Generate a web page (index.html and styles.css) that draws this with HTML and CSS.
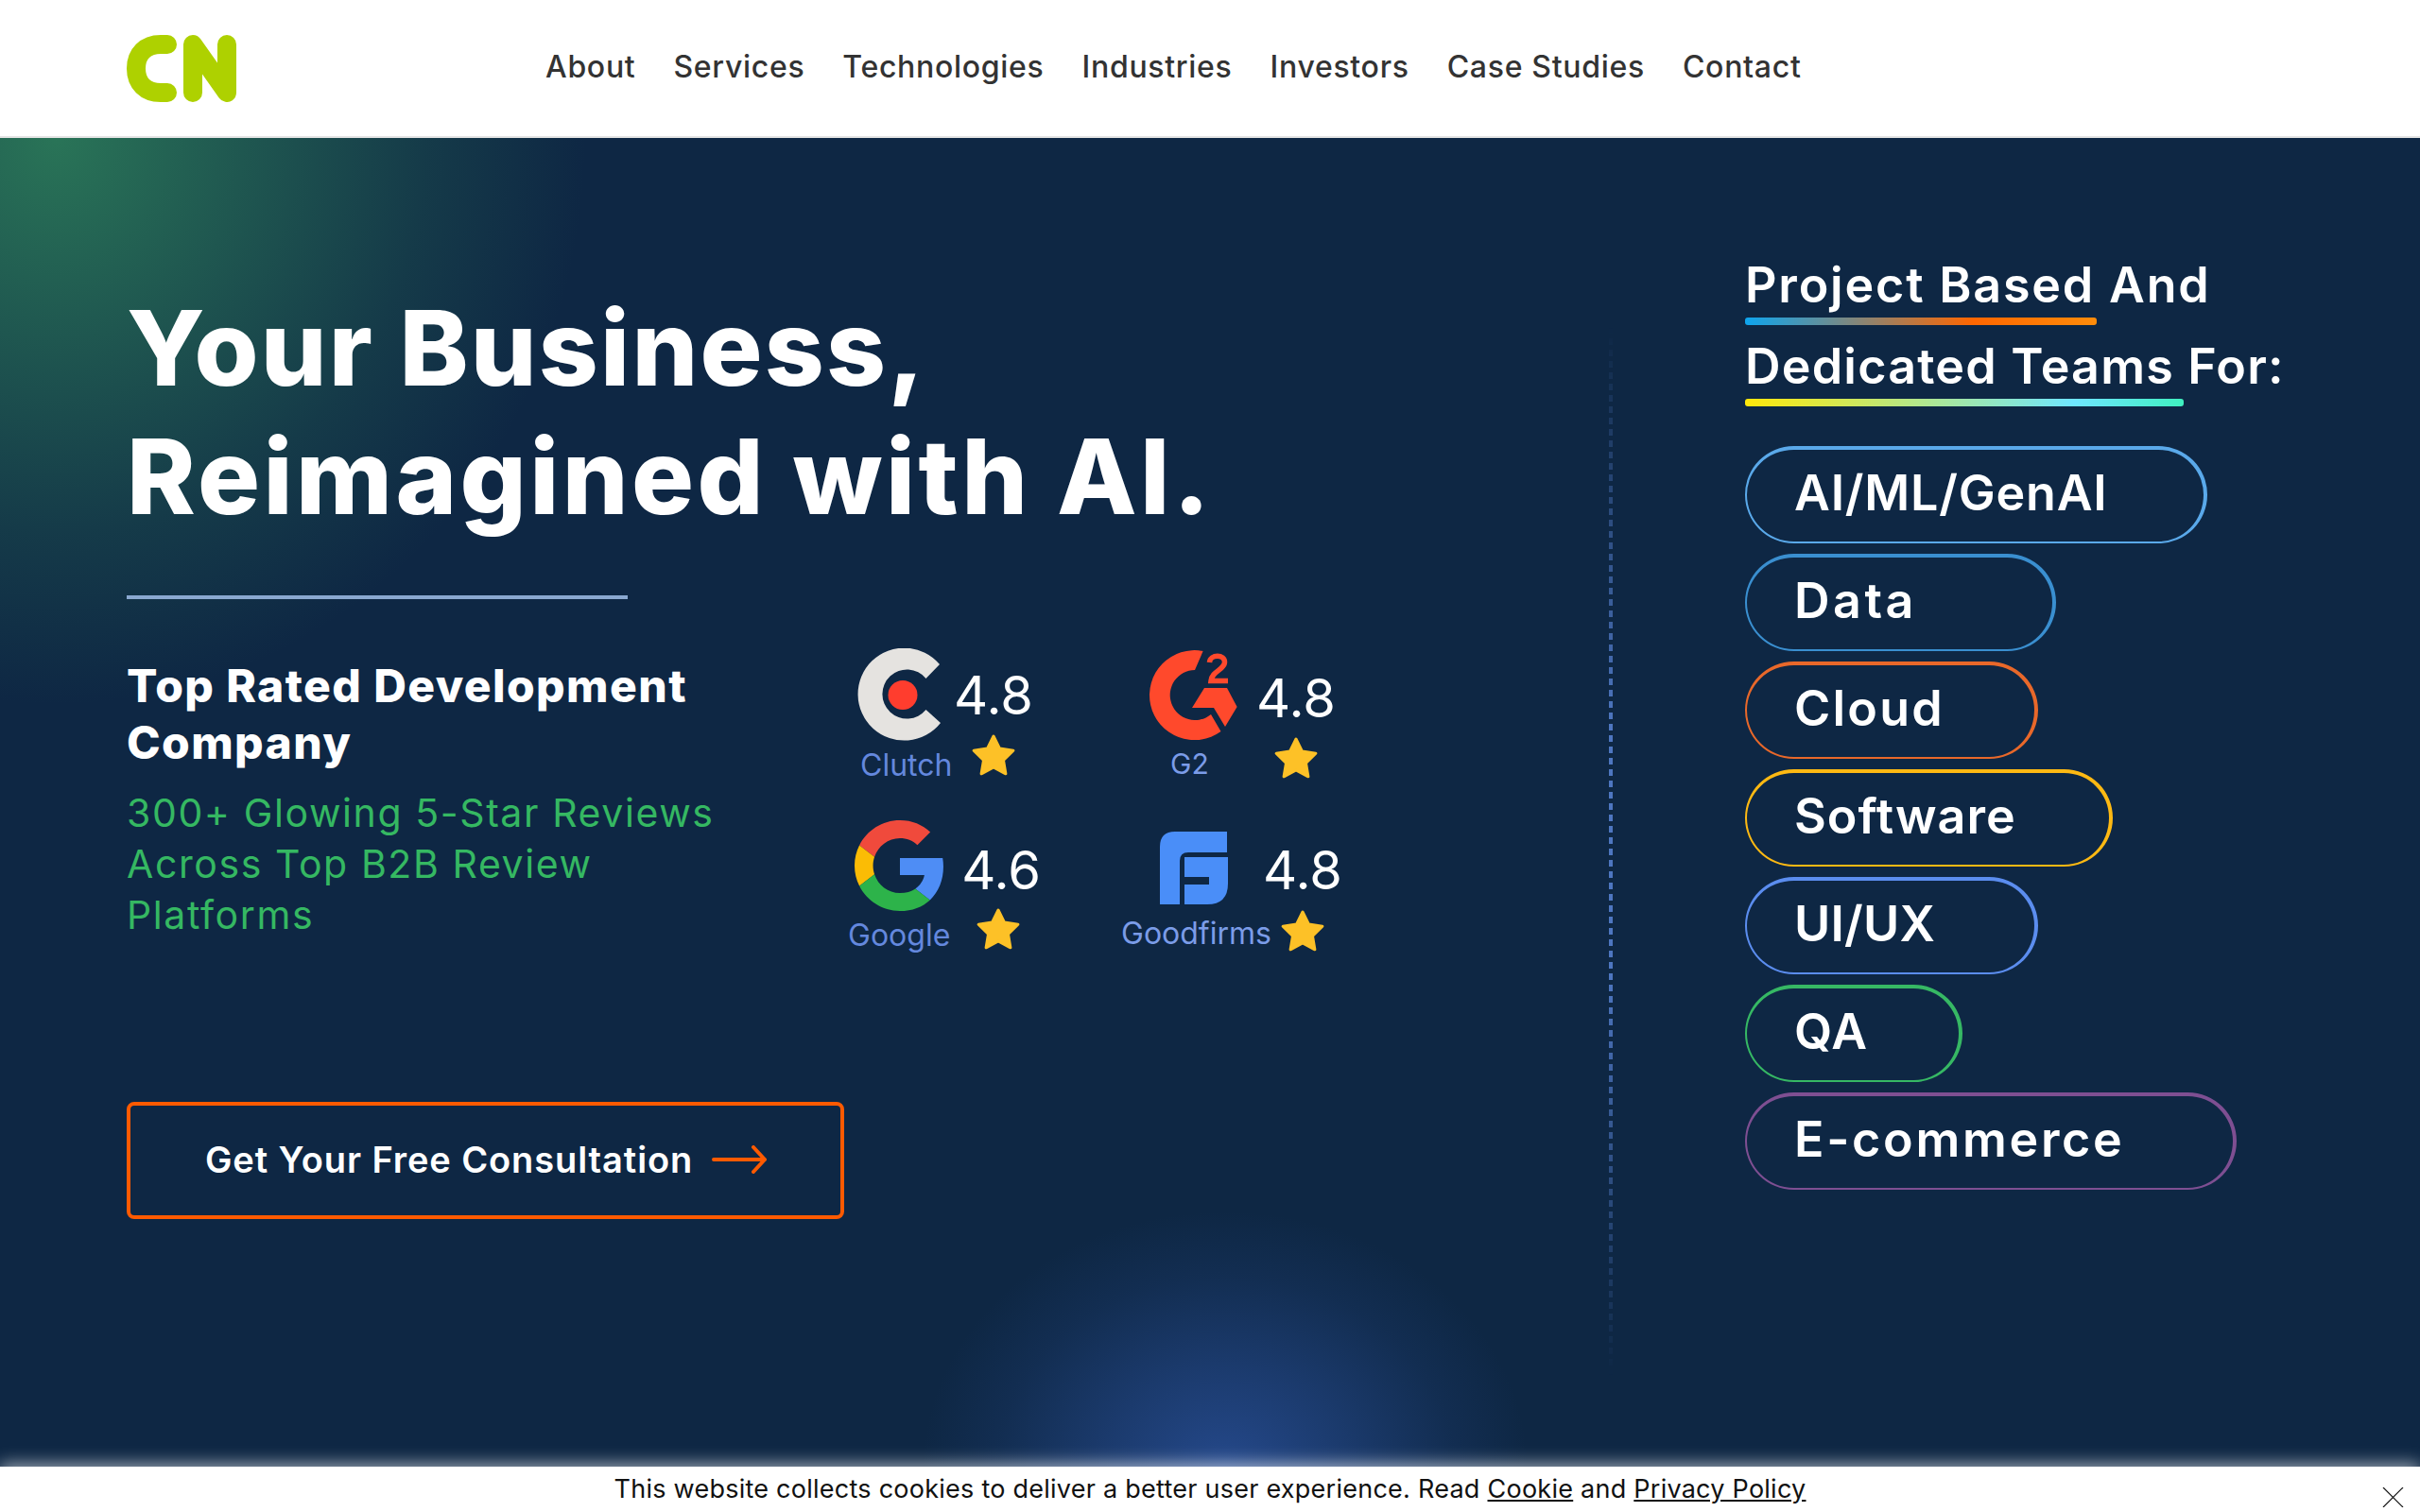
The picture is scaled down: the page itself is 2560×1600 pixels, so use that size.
FILE: index.html
```html
<!DOCTYPE html>
<html lang="en">
<head>
<meta charset="utf-8">
<title>CN</title>
<link rel="stylesheet" href="styles.css">
</head>
<body>
<header class="site-header">
  <a class="logo" href="#" aria-label="CN">
    <svg viewBox="0 0 116 71" width="116" height="71"><g fill="none" stroke="#aed100" stroke-width="20" stroke-linecap="round" stroke-linejoin="round"><path d="M43 10H36C20 10 10 20 10 35.5S20 61 36 61H43"/><path d="M70 61V10L106 61V10"/></g></svg>
  </a>
  <nav class="main-nav">
    <a class="nav-about" href="#">About</a>
    <a class="nav-services" href="#">Services</a>
    <a class="nav-tech" href="#">Technologies</a>
    <a class="nav-ind" href="#">Industries</a>
    <a class="nav-inv" href="#">Investors</a>
    <a class="nav-case" href="#">Case Studies</a>
    <a class="nav-contact" href="#">Contact</a>
  </nav>
</header>
<main class="hero">
  <section class="hero-left">
    <h1 class="headline"><span class="headline-top">Your Business,</span><span class="headline-bottom">Reimagined with AI.</span></h1>
    <div class="rule"></div>
    <div class="proof">
      <div class="proof-text">
        <h2 class="proof-title">Top Rated Development Company</h2>
        <p class="proof-sub">300+ Glowing 5-Star Reviews Across Top B2B Review Platforms</p>
      </div>
      <div class="ratings">
        <div class="rating rating-clutch">
          <div class="brand">
            <svg class="brand-logo" viewBox="0 0 90 98" width="90" height="98"><path fill="#e5e3e0" d="M88 17A49 49 0 1 0 89 79L73.5 65A26 26 0 1 1 73.5 32Z"/><circle cx="49" cy="49.5" r="15.5" fill="#ff3d2e"/></svg>
            <span class="brand-name">Clutch</span>
          </div>
          <div class="score">
            <span class="value">4.8</span>
            <svg class="star" viewBox="0 0 48 46" width="48" height="46"><use href="#star"/></svg>
          </div>
        </div>
        <div class="rating rating-g2">
          <div class="brand">
            <svg class="brand-logo" viewBox="0 0 93 95" width="93" height="95"><path fill="#ff492c" d="M56.6 1A47.5 47.5 0 1 0 75.5 86L65 68A26.5 26.5 0 1 1 48 21Z"/><path fill="#ff492c" d="M58 40H82L92.6 60 80 81 68 61H45Z"/><path fill="none" stroke="#ff492c" stroke-width="5.5" d="M63.500 13C64 4 80 4 79.500 13 79 21 66 22 65 32.500H83"/></svg>
            <span class="brand-name">G2</span>
          </div>
          <div class="score">
            <span class="value">4.8</span>
            <svg class="star" viewBox="0 0 48 46" width="48" height="46"><use href="#star"/></svg>
          </div>
        </div>
        <div class="rating rating-google">
          <div class="brand">
            <svg class="brand-logo" viewBox="0 0 48 48" width="96" height="96"><path fill="#f04a3c" d="M24 9.500c3.540 0 6.710 1.220 9.210 3.600l6.850-6.850C35.900 2.380 30.470 0 24 0 14.620 0 6.510 5.380 2.560 13.220l7.980 6.190C12.430 13.720 17.740 9.500 24 9.500z"/><path fill="#4e8df5" d="M46.980 24.550c0-1.570-.15-3.090-.38-4.550H24v9.020h12.940c-.58 2.960-2.260 5.480-4.780 7.180l7.730 6c4.510-4.180 7.090-10.360 7.090-17.650z"/><path fill="#fbbc05" d="M10.530 28.590c-.48-1.450-.76-2.990-.76-4.590s.27-3.140.76-4.590l-7.980-6.190C.92 16.460 0 20.120 0 24c0 3.880.92 7.540 2.560 10.780l7.970-6.190z"/><path fill="#2db34a" d="M24 48c6.480 0 11.930-2.130 15.890-5.810l-7.730-6c-2.150 1.450-4.920 2.300-8.160 2.300-6.260 0-11.570-4.220-13.470-9.910l-7.980 6.190C6.510 42.620 14.620 48 24 48z"/></svg>
            <span class="brand-name">Google</span>
          </div>
          <div class="score">
            <span class="value">4.6</span>
            <svg class="star" viewBox="0 0 48 46" width="48" height="46"><use href="#star"/></svg>
          </div>
        </div>
        <div class="rating rating-goodfirms">
          <div class="brand">
            <svg class="brand-logo" viewBox="0 0 72 77" width="72" height="77"><path fill="#4a8ef8" d="M0 77V16Q0 0 16 0H71V22H30Q21 22 21 31V77Z"/><path fill="#4a8ef8" d="M26 27H72V55Q72 77 50 77H26V56H52V48H26Z"/></svg>
            <span class="brand-name">Goodfirms</span>
          </div>
          <div class="score">
            <span class="value">4.8</span>
            <svg class="star" viewBox="0 0 48 46" width="48" height="46"><use href="#star"/></svg>
          </div>
        </div>
      </div>
    </div>
    <a class="cta" href="#">
      <span>Get Your Free Consultation</span>
      <svg viewBox="0 0 58 30" width="58" height="30"><path fill="none" stroke="#ff5a00" stroke-width="4" stroke-linecap="round" stroke-linejoin="round" d="M2 15H56M44 2L56 15 44 28"/></svg>
    </a>
  </section>
  <div class="dash-line"></div>
  <aside class="hero-right">
    <h2 class="teams-title">
      <span class="title-line line-one">Project Based And</span>
      <span class="title-line line-two">Dedicated Teams For:</span>
    </h2>
    <ul class="pills">
      <li class="pill pill-ai">AI/ML/GenAI</li>
      <li class="pill pill-data">Data</li>
      <li class="pill pill-cloud">Cloud</li>
      <li class="pill pill-software">Software</li>
      <li class="pill pill-ux">UI/UX</li>
      <li class="pill pill-qa">QA</li>
      <li class="pill pill-ecom">E-commerce</li>
    </ul>
  </aside>
</main>
<footer class="cookie-bar">
  <p class="cookie-text">This website collects cookies to deliver a better user experience. Read <a href="#">Cookie</a> and <a href="#">Privacy Policy</a></p>
  <svg class="cookie-close" viewBox="0 0 23 21" width="23" height="21"><path fill="none" stroke="#111" stroke-width="1.200" d="M1 0L22 21M22 0L1 21"/></svg>
</footer>
<svg class="defs" width="0" height="0"><defs><polygon id="star" fill="#fdc127" stroke="#fdc127" stroke-width="3" stroke-linejoin="round" points="24,3 30.500,16.100 44.900,18.200 34.500,28.400 36.900,42.800 24,36 11.100,42.800 13.500,28.400 3.100,18.200 17.500,16.100"/></defs></svg>
</body>
</html>
```

FILE: styles.css
```css
* { box-sizing: border-box; }
html, body { margin: 0; padding: 0; }
body {
  width: 2560px;
  height: 1600px;
  overflow: hidden;
  font-family: "Inter", "Liberation Sans", sans-serif;
  background: #fff;
}
a { color: inherit; text-decoration: none; }
.defs { position: absolute; }

.site-header {
  height: 146px;
  padding-left: 134px;
  border-bottom: 2px solid #e4e4e4;
  background: #fff;
  display: flex;
  align-items: center;
}
.logo { display: flex; width: 116px; }
.main-nav {
  margin-left: 327px;
  display: flex;
  gap: 40px;
  font-size: 32px;
  font-weight: 500;
  letter-spacing: .7px;
  color: #333;
  line-height: 40px;
  margin-top: -3px;
}

.hero {
  height: 1406px;
  display: flex;
  align-items: flex-start;
  color: #fff;
  background:
    radial-gradient(ellipse 560px 600px at 60px 0, rgba(48, 135, 92, .8) 0, rgba(48, 135, 92, .5) 35%, rgba(48, 135, 92, .2) 70%, rgba(48, 135, 92, 0) 100%),
    radial-gradient(ellipse 320px 270px at 1296px 100%, rgba(45, 85, 165, .72) 0, rgba(45, 85, 165, .42) 40%, rgba(45, 85, 165, .14) 75%, rgba(45, 85, 165, 0) 100%),
    #0e2744;
}
.hero-left {
  width: 1702px;
  flex: none;
  padding: 154px 0 0 134px;
}
.headline {
  margin: 0;
  font-size: 110px;
  line-height: 136px;
  font-weight: 800;
}
.headline-top { display: block; letter-spacing: 2.2px; }
.headline-bottom { display: block; letter-spacing: 3.4px; }
.rule {
  width: 530px;
  height: 4px;
  margin-top: 58px;
  background: #8aa8d0;
}
.proof {
  display: flex;
  height: 322px;
  margin-top: 52px;
}
.proof-text {
  width: 763px;
  flex: none;
  padding-top: 10px;
}
.proof-title {
  margin: 0;
  width: 620px;
  font-size: 48px;
  line-height: 60px;
  font-weight: 800;
  letter-spacing: 1.4px;
}
.proof-sub {
  margin: 17px 0 0;
  width: 640px;
  font-size: 41px;
  line-height: 54px;
  letter-spacing: 1.6px;
  color: #35b862;
}

.ratings {
  display: grid;
  grid-template-columns: 289px 289px;
  grid-auto-rows: 182px;
}
.rating { display: flex; align-items: flex-start; }
.brand { display: flex; flex-direction: column; align-items: flex-start; flex: none; }
.brand-logo { display: block; }
.brand-name {
  display: block;
  font-size: 32px;
  line-height: 30px;
  color: #6488de;
  white-space: nowrap;
}
.score { display: flex; flex-direction: column; align-items: center; width: 80px; flex: none; }
.value { display: block; font-size: 56px; line-height: 60px; }
.star { display: block; }

.rating-clutch .brand { width: 114px; }
.rating-clutch .brand-logo { margin-left: 9px; }
.rating-clutch .brand-name { margin: 11px 0 0 13px; }
.rating-clutch .score { margin-top: 20px; }
.rating-clutch .star { margin-top: 10px; }

.rating-g2 .brand { width: 145px; }
.rating-g2 .brand-logo { margin: 2px 0 0 30px; }
.rating-g2 .brand-name { margin: 10px 0 0 52px; font-size: 30px; color: #7b9ce8; }
.rating-g2 .score { margin-top: 23px; }
.rating-g2 .star { margin-top: 10px; }

.rating-google .brand { width: 122px; }
.rating-google .brand-logo { margin-left: 7px; }
.rating-google .brand-name { margin: 11px 0 0; }
.rating-google .score { margin-top: 23px; }
.rating-google .star { margin: 9px 0 0 -6px; }

.rating-goodfirms .brand { width: 152px; }
.rating-goodfirms .brand-logo { margin: 12px 0 0 41px; }
.rating-goodfirms .brand-name { margin: 16px 0 0; color: #7b9ce8; }
.rating-goodfirms .score { margin-top: 23px; }
.rating-goodfirms .star { margin-top: 11px; }

.cta {
  margin-top: 158px;
  width: 759px;
  height: 124px;
  border: 4px solid #ff5a00;
  border-radius: 8px;
  padding: 0 0 2px 79px;
  display: flex;
  align-items: center;
  gap: 20px;
  font-size: 38px;
  font-weight: 600;
  letter-spacing: .9px;
}

.dash-line {
  width: 4px;
  height: 1110px;
  margin-top: 200px;
  flex: none;
  background: repeating-linear-gradient(to bottom, #4e76c0 0, #4e76c0 7px, transparent 7px, transparent 12px);
  -webkit-mask-image: linear-gradient(to bottom, transparent 0, #000 38%, #000 62%, transparent 100%);
  mask-image: linear-gradient(to bottom, transparent 0, #000 38%, #000 62%, transparent 100%);
}

.hero-right {
  margin-left: 140px;
  padding-top: 121px;
}
.teams-title { margin: 0; font-size: 52px; font-weight: 600; letter-spacing: 1.2px; }
.title-line {
  display: block;
  line-height: 69px;
  margin-bottom: 9px;
  white-space: nowrap;
}
.title-line::after {
  content: "";
  display: block;
  height: 8px;
  border-radius: 3px;
}
.line-one { letter-spacing: 1.8px; }
.line-one::after {
  width: 372px;
  background: linear-gradient(to right, #0ea5ee 0, #ff6600 65%, #ff8c0a 100%);
}
.line-two::after {
  width: 464px;
  background: linear-gradient(to right, #ffe80a 0, #6fe6ff 75%, #3ff0c0 100%);
}
.pills {
  list-style: none;
  margin: 42px 0 0;
  padding: 0;
  display: flex;
  flex-direction: column;
  align-items: flex-start;
  gap: 11px;
}
.pill {
  height: 103px;
  padding: 0 0 6px 50px;
  display: flex;
  align-items: center;
  border-style: solid;
  border-width: 4px 4px 2px 2px;
  border-radius: 52px;
  font-size: 52px;
  font-weight: 600;
}
.pill-ai { width: 489px; border-color: #5aa9ea; letter-spacing: .8px; }
.pill-data { width: 329px; border-color: #3a8fd0; letter-spacing: 3.5px; }
.pill-cloud { width: 310px; border-color: #e8682a; letter-spacing: 2.2px; }
.pill-software { width: 389px; border-color: #fdb913; letter-spacing: 1px; }
.pill-ux { width: 310px; border-color: #5b8def; letter-spacing: .2px; }
.pill-qa { width: 230px; border-color: #36b864; letter-spacing: 1px; }
.pill-ecom { width: 520px; border-color: #7e4f92; letter-spacing: 2.7px; }

.cookie-bar {
  position: relative;
  height: 48px;
  background: #fff;
  box-shadow: 0 -3px 18px rgba(255, 255, 255, .6);
  display: flex;
  align-items: center;
  justify-content: center;
  color: #111;
}
.cookie-text { margin: 0; font-size: 27px; line-height: 48px; letter-spacing: .25px; }
.cookie-text a { text-decoration: underline; }
.cookie-close { position: absolute; left: 2520px; top: 22px; }
```
